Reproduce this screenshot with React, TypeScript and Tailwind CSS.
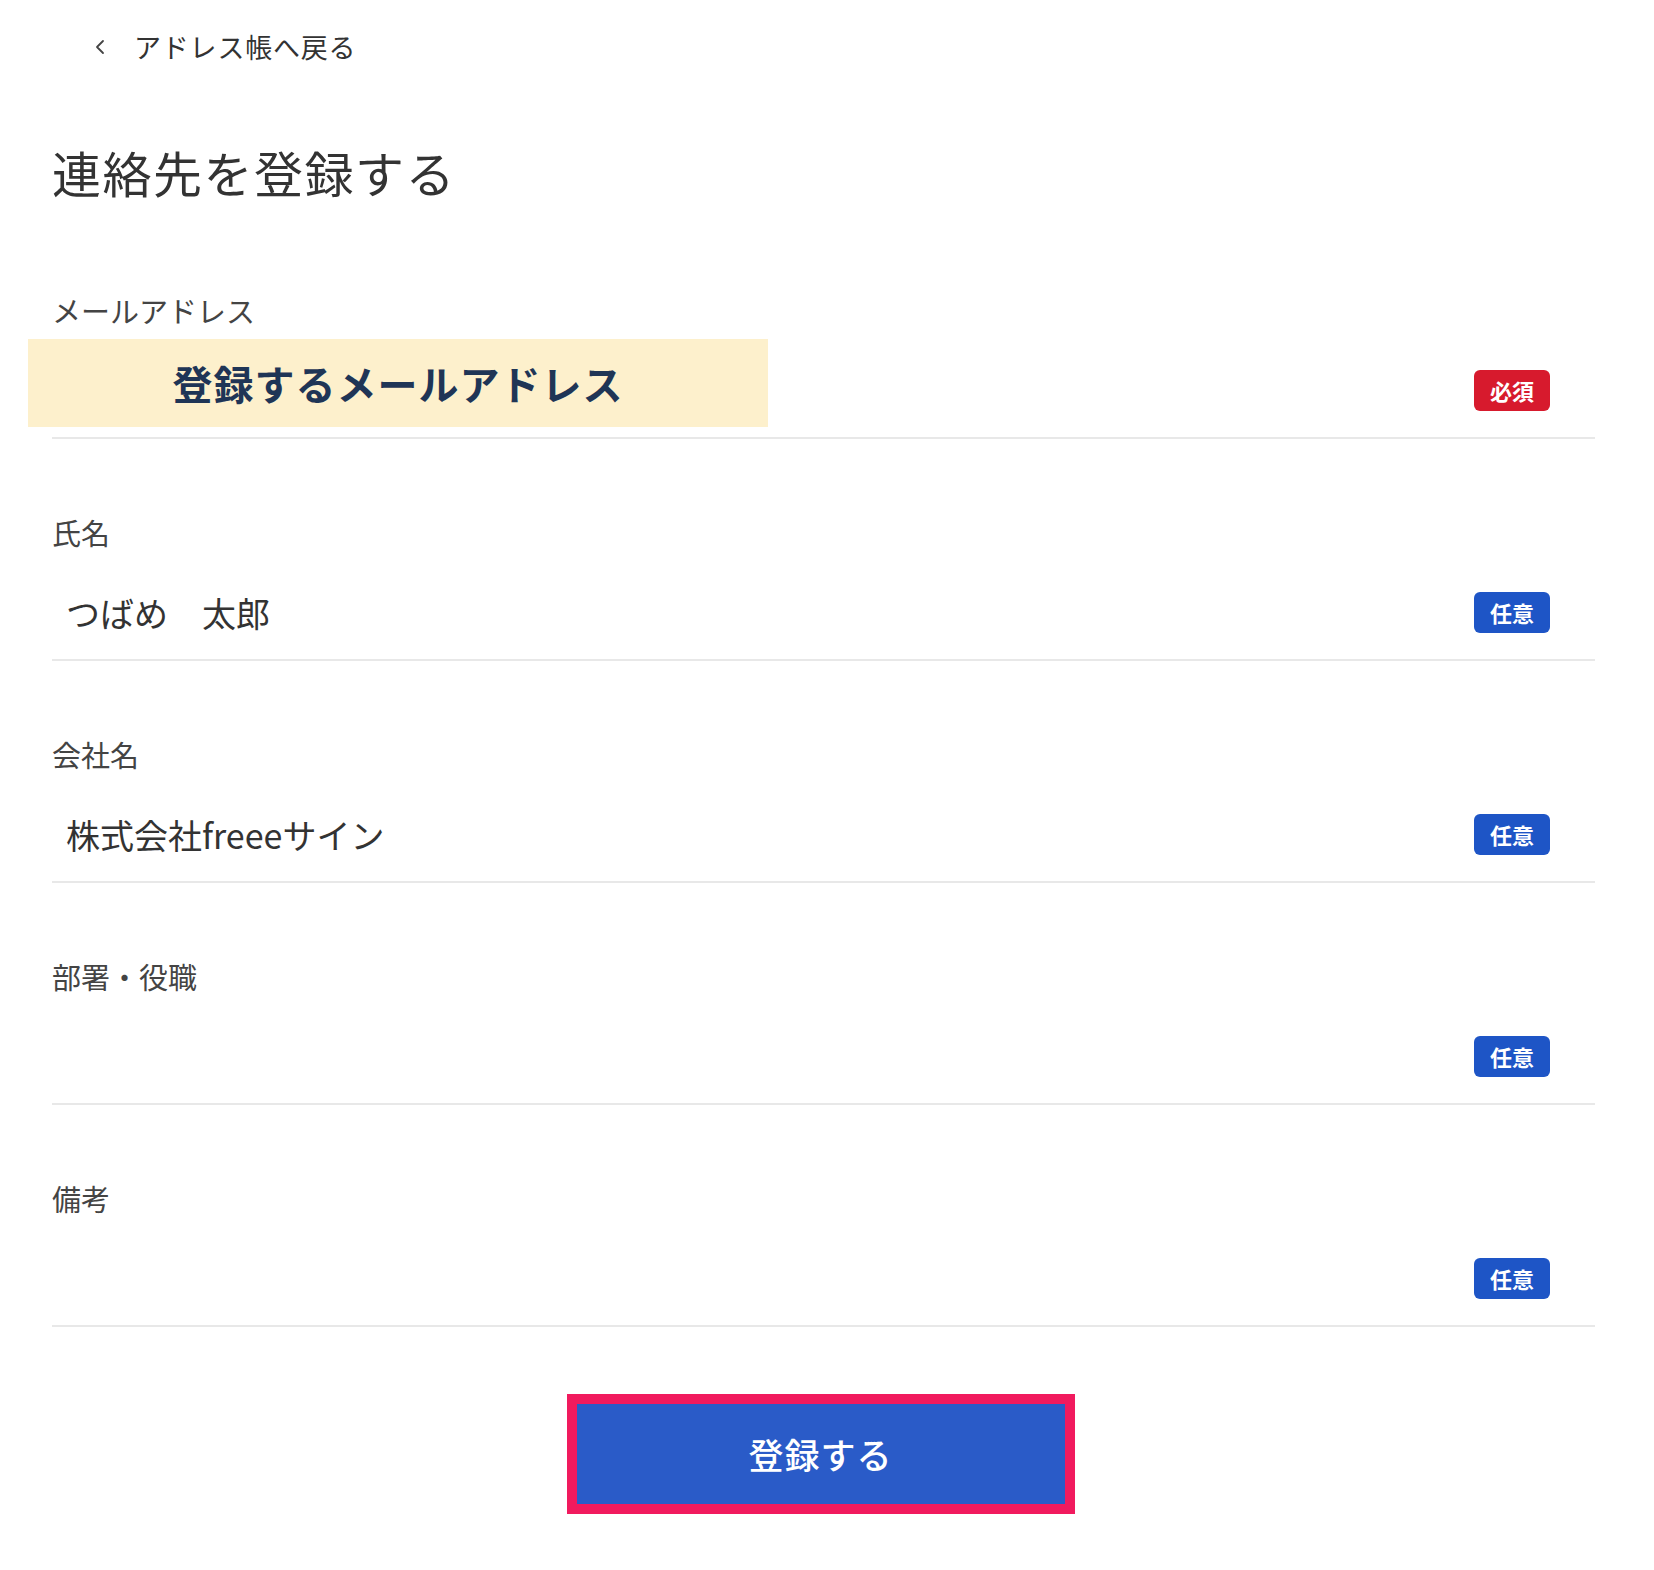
import { ChevronLeft } from 'lucide-react';

const FIELDS = [
  { label: 'メールアドレス', value: '', required: true },
  { label: '氏名', value: 'つばめ　太郎', required: false },
  { label: '会社名', value: '株式会社freeeサイン', required: false },
  { label: '部署・役職', value: '', required: false },
  { label: '備考', value: '', required: false },
];

const font = { fontFamily: '"Noto Sans CJK JP", "Noto Sans", sans-serif' };

export default function App() {
  return (
    <div className="min-h-screen bg-white text-[#333]" style={font}>
      <main className="pl-[52px] pr-[59px] pt-[27px] pb-[50px]">
        {/* Back link */}
        <a href="#" className="flex items-center h-[40px] pl-[36px] text-[27px] text-[#333]">
          <ChevronLeft size={24} strokeWidth={1.8} className="text-[#444]" />
          <span className="ml-[22px] tracking-[0.8px]">アドレス帳へ戻る</span>
        </a>

        {/* Title */}
        <h1 className="mt-[75px] h-[60px] leading-[60px] text-[49px] font-normal text-[#333] tracking-[1.5px]">
          連絡先を登録する
        </h1>

        {/* Fields */}
        <div className="mt-[88px]">
          {FIELDS.map((field, i) => (
            <div
              key={field.label}
              className={(i > 0 ? 'pt-[73px] ' : '') + 'border-b-2 border-[#e8e8e8] pb-[15px]'}
            >
              <label className="block h-[40px] leading-[40px] text-[29px] text-[#444]">
                {field.label}
              </label>
              <div className="relative mt-[28px] h-[64px] flex items-center justify-between">
                <span className="pl-[14px] text-[34px] text-[#333]">{field.value}</span>
                {i === 0 && (
                  <div className="absolute left-[-24px] top-[-19px] w-[740px] h-[88px] bg-[#fdf0cc] flex items-center justify-center">
                    <span className="text-[40px] font-bold text-[#1f3556] tracking-[1px]">
                      登録するメールアドレス
                    </span>
                  </div>
                )}
                <span
                  className={
                    'mr-[45px] w-[76px] h-[41px] rounded-[6px] flex items-center justify-center text-white text-[22px] font-bold ' +
                    (field.required ? 'bg-[#d71a2d]' : 'bg-[#1e55c6]')
                  }
                >
                  {field.required ? '必須' : '任意'}
                </span>
              </div>
            </div>
          ))}
        </div>

        {/* Submit */}
        <div className="mt-[67px] flex justify-center pr-[6px]">
          <button
            type="submit"
            className="w-[508px] h-[120px] border-[10px] border-[#f11a5e] bg-[#2a5bc8] text-white text-[35px] font-medium tracking-[1px]"
          >
            登録する
          </button>
        </div>
      </main>
    </div>
  );
}
